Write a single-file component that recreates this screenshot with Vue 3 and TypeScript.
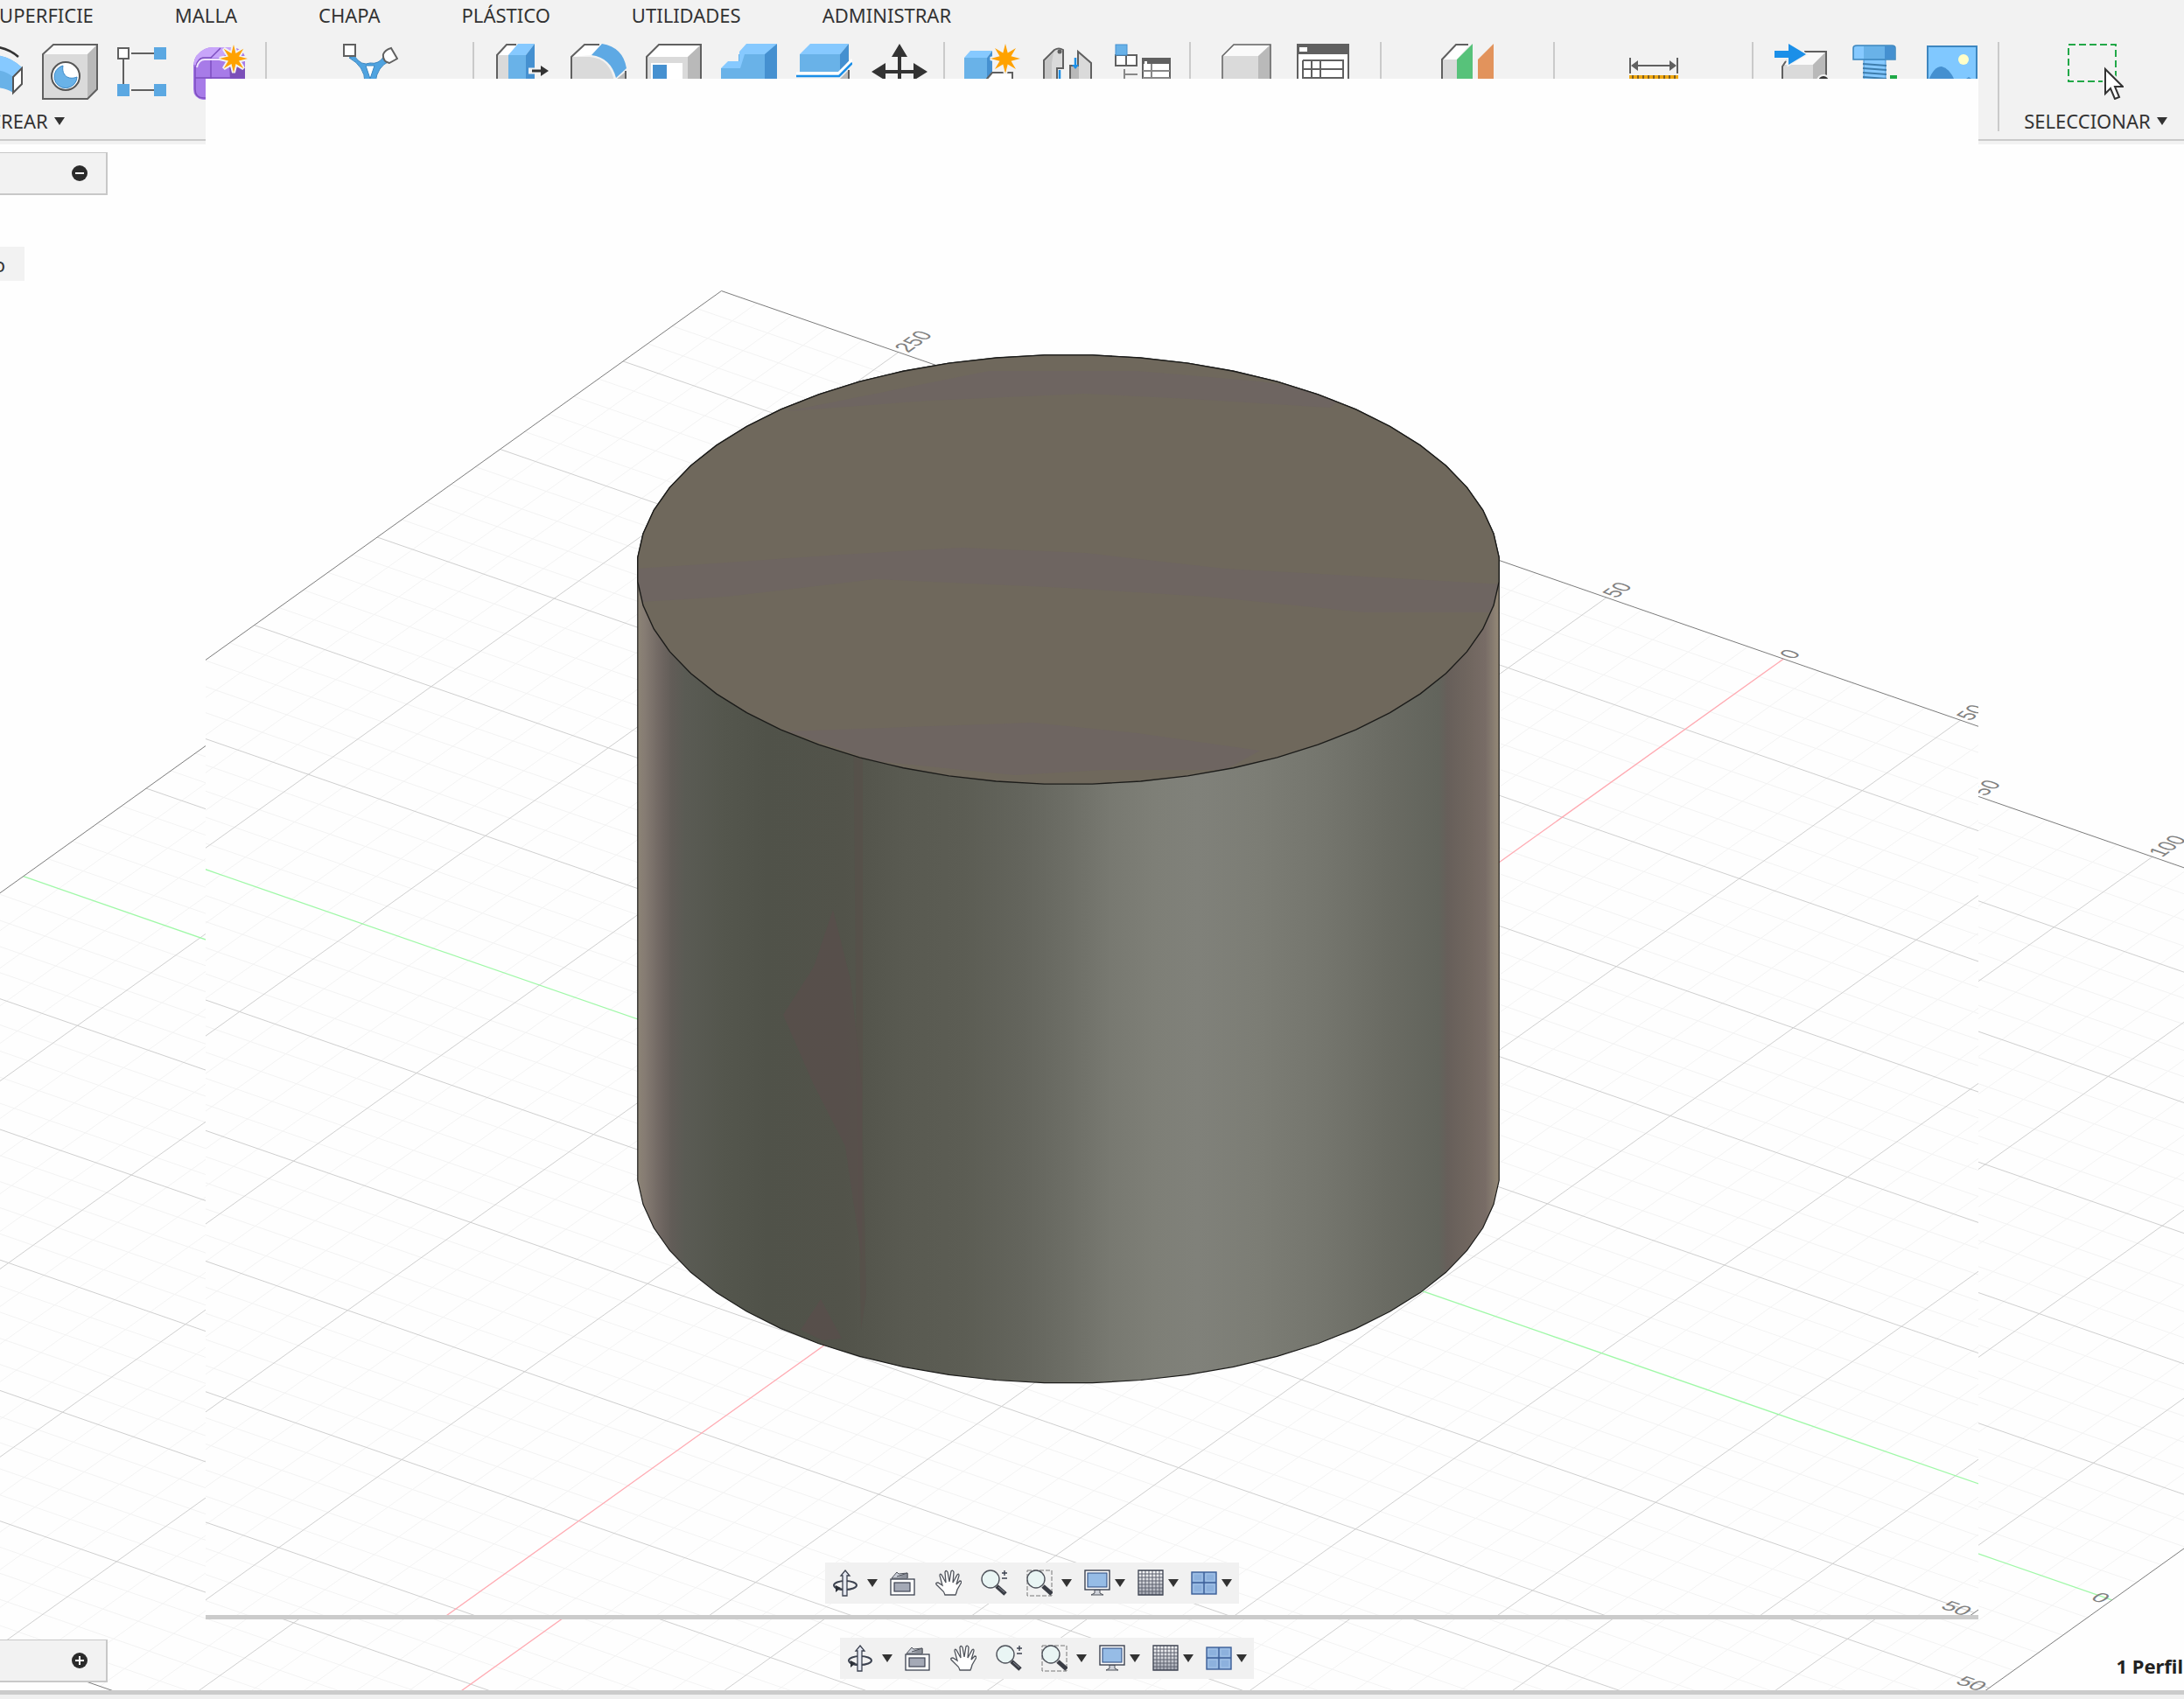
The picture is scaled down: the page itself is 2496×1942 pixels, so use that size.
<script setup lang="ts">
interface Point { x: number; y: number }
interface Segment { x1: number; y1: number; x2: number; y2: number }
interface Tick { text: string; matrix: string; anchor: string }
interface RibbonGroup { id: string; width: number; icons: string[]; label?: string }
interface ViewTool { id: string; name: string; menu: boolean; tight: boolean }

const tabs: string[] = ['SUPERFICIE', 'MALLA', 'CHAPA', 'PLÁSTICO', 'UTILIDADES', 'ADMINISTRAR']

const groups: RibbonGroup[] = [
  { id: 'create', width: 547, icons: ['revolve', 'hole', 'pattern', 'form'], label: 'CREAR' },
  { id: 'auto', width: 237, icons: ['auto'] },
  { id: 'modify', width: 538, icons: ['press', 'fillet', 'shell', 'combine', 'split', 'move'] },
  { id: 'assemble', width: 281, icons: ['component', 'joint', 'bom'] },
  { id: 'configure', width: 218, icons: ['box', 'table'] },
  { id: 'construct', width: 198, icons: ['plane'] },
  { id: 'inspect', width: 227, icons: ['measure'] },
  { id: 'insert', width: 281, icons: ['insert', 'bolt', 'canvas'] },
  { id: 'select', width: 220, icons: ['select'], label: 'SELECCIONAR' },
]

const star = (cx: number, cy: number, outer: number, inner: number): string => {
  const pts: string[] = []
  for (let i = 0; i < 16; i++) {
    const r = i % 2 === 0 ? outer : inner
    const a = (i * Math.PI) / 8 - Math.PI / 2
    pts.push(`${(cx + r * Math.cos(a)).toFixed(1)},${(cy + r * Math.sin(a)).toFixed(1)}`)
  }
  return `<polygon points="${pts.join(' ')}" fill="#ffa200" stroke="#f2f2f2" stroke-width="4" paint-order="stroke"/>`
}

const art: Record<string, string> = {
  revolve: `<path d="M30 3Q48 5 59 15" fill="none" stroke="#333" stroke-width="2.5"/><path d="M30 13Q48 13 63 27L53 38V56Q44 50 30 50Z" fill="#69b2e8"/><path d="M30 13Q48 13 63 27L53 38Q44 30 30 30Z" fill="#86c9ff"/><path d="M53 38L63 28V46L53 56Z" fill="#fff" stroke="#555" stroke-width="2"/>`,
  hole: `<path d="M1 12L13 1H63V52L52 63H1Z" fill="#dadada"/><path d="M1 12L13 1H63L52 12Z" fill="#fafafa"/><path d="M52 12L63 1V52L52 63Z" fill="#b9b9b9"/><path d="M1 12L13 1H63V52L52 63H1Z" fill="none" stroke="#606060" stroke-width="2"/><circle cx="27" cy="37" r="16" fill="#fff" stroke="#555" stroke-width="2"/><path d="M24 25C22 36 30 42 40 38A13 13 0 1 1 24 25Z" fill="#69b2e8" stroke="#3d8ac8"/>`,
  pattern: `<path d="M16 11H42M7 18V46M16 53H42" stroke="#606060" stroke-width="2"/><rect x="1" y="5" width="12" height="12" fill="#fff" stroke="#606060" stroke-width="2"/><path d="M42 4h14v14h-14zM0 46h14v14H0zM42 46h14v14h-14z" fill="#5ba8e2"/>`,
  form: `<path d="M1 24Q2 12 14 6Q18 4 24 4H46Q60 6 60 18V48Q58 58 50 62Q48 64 42 64H12Q1 62 1 52Z" fill="#a77be8"/><path d="M1 24Q2 12 14 6Q18 4 24 4H46L34 16H14Q6 16 4 24Z" fill="#c8a5fa"/><path d="M42 22Q52 20 60 26V48Q56 60 44 63Z" fill="#7b4fb8"/><path d="M3 26V52Q3 62 13 62H42M3 39H60M21 16V62M21 16L32 5M21 16H12Q6 17 4 26" fill="none" stroke="#7e4fc0" stroke-width="1.5"/><path d="M5 27Q7 18 14 18H38" fill="none" stroke="#efe3ff" stroke-width="2"/>${star(47, 17, 16, 6.5)}`,
  auto: `<path d="M14 14Q22 26 32 22Q42 24 48 14L54 20Q40 26 38 44H26Q26 26 8 16Z" fill="#4fa3e0" stroke="#3b86c0"/><path d="M27 25H37L32 40Z" fill="#fff" stroke="#3b86c0"/><rect x="2" y="1" width="13" height="13" fill="#fff" stroke="#606060" stroke-width="2"/><path d="M56 5L63 17L54 22Q46 20 47 12Q49 7 56 5Z" fill="#fff" stroke="#606060" stroke-width="2"/>`,
  press: `<path d="M2 64V13L13 1H26L16 13V64Z" fill="#dadada"/><path d="M2 13L13 1H26L15 13Z" fill="#fff"/><path d="M2 64V13L13 1H24" fill="none" stroke="#606060" stroke-width="2"/><path d="M15 13H35V64H15Z" fill="#69b2e8"/><path d="M15 13L26 0H45L35 13Z" fill="#86c9ff"/><path d="M35 13L45 0V52L35 64Z" fill="#4590d0"/><path d="M38 31H60" stroke="#f2f2f2" stroke-width="7"/><path d="M42 31H54" stroke="#333" stroke-width="3"/><path d="M52 25L61 31L52 37Z" fill="#333"/>`,
  fillet: `<path d="M1 15L16 1H34L24 13Z" fill="#fff"/><path d="M1 64V15H22Q46 17 50 44V64Z" fill="#dadada"/><path d="M1 64V15L16 1H33" fill="none" stroke="#606060" stroke-width="2"/><path d="M36 0Q60 4 64 28L52 39Q46 16 24 13Z" fill="#5ea9e4"/><path d="M52 41L64 31V64H52Z" fill="#b9b9b9"/><path d="M63 31V64" stroke="#606060" stroke-width="2"/>`,
  shell: `<path d="M1 15L15 1H63L48 15Z" fill="#fff"/><path d="M1 15H48V64H1Z" fill="#dadada"/><path d="M48 15L63 1V50L48 64Z" fill="#b9b9b9"/><path d="M6 22H42V60H6Z" fill="#fff"/><path d="M8 24H24V60H8Z" fill="#4590d0"/><path d="M1 64V15L15 1H63V50" fill="none" stroke="#606060" stroke-width="2"/>`,
  combine: `<path d="M0 28H20V12H50V64H0Z" fill="#69b2e8"/><path d="M0 28L8 20H21V9L29 0H64L52 12H27L22 28Z" fill="#86c9ff"/><path d="M50 12L64 0V50L50 64Z" fill="#4590d0"/>`,
  split: `<path d="M4 12H50V32H4Z" fill="#69b2e8"/><path d="M4 12L16 0H60L50 12Z" fill="#86c9ff"/><path d="M50 12L60 0V20L50 32Z" fill="#4590d0"/><path d="M0 34H48L64 18" fill="none" stroke="#fff" stroke-width="3"/><path d="M0 37H49L64 22" fill="none" stroke="#1b8fe8" stroke-width="2.5"/><path d="M60 30V60L50 64V40Z" fill="#b9b9b9"/><path d="M60 30V60" stroke="#606060" stroke-width="2"/>`,
  move: `<path d="M32 10V54M10 32H54" stroke="#333" stroke-width="4"/><path d="M32 0L41 15H23ZM32 64L41 49H23ZM0 32L16 22V42ZM64 32L48 22V42Z" fill="#333"/>`,
  component: `<path d="M0 16H26V50H0Z" fill="#69b2e8"/><path d="M0 16L7 8H32L26 16Z" fill="#86c9ff"/><path d="M26 16L32 8V32L26 40Z" fill="#4590d0"/><path d="M26 40L32 33H55V60H26Z" fill="#fff" stroke="#606060" stroke-width="2"/>${star(47, 17, 17, 7)}`,
  joint: `<path d="M5 60V19L17 7Q22 4 27 7V28H20V60Z" fill="#dadada" stroke="#606060" stroke-width="2"/><path d="M16 10L6 20V60H14V22Z" fill="#c6c6c6"/><circle cx="23" cy="9" r="2.5" fill="#606060"/><path d="M35 60V25H44V9L59 22V60Z" fill="#dadada" stroke="#606060" stroke-width="2"/><path d="M36 26H45V60H36Z" fill="#b9b9b9"/><path d="M23 30V60M41 16V26" stroke="#1b8fe8" stroke-width="2.5"/><path d="M37 24H45L41 29Z" fill="#1b8fe8"/>`,
  bom: `<path d="M1 13H25V25H1ZM13 13V25" fill="#fff" stroke="#606060" stroke-width="2"/><rect x="1" y="1" width="13" height="12" fill="#69b2e8" stroke="#4590d0"/><path d="M11 29V60M11 35H26" stroke="#888" stroke-width="2"/><path d="M32 17H63V60H32Z" fill="#fff" stroke="#606060" stroke-width="2"/><path d="M32 16H64V23H32Z" fill="#606060"/><path d="M32 31H63M32 39H63M42 23V60" stroke="#888" stroke-width="2"/><path d="M34 20h3v3h-3z" fill="#fff"/>`,
  box: `<path d="M3 14H44V64H3Z" fill="#dadada"/><path d="M3 14L16 1H58L44 14Z" fill="#fafafa"/><path d="M44 14L58 1V52L44 64Z" fill="#b9b9b9"/><path d="M3 64V14L16 1H58V52" fill="none" stroke="#606060" stroke-width="1.5"/>`,
  table: `<path d="M3 1H61V63H3Z" fill="#fff" stroke="#606060" stroke-width="2"/><path d="M2 0H62V12H2Z" fill="#606060"/><path d="M5 4h9v5H5z" fill="#fff"/><path d="M9 19H55V60M9 29H55M9 39H55M9 19V60M19 19V40M29 19V40" fill="none" stroke="#606060" stroke-width="2"/>`,
  plane: `<path d="M3 18L19 1H34L20 18V64H3Z" fill="#fff"/><path d="M3 18H20V64H3Z" fill="#dadada"/><path d="M3 64V18L19 1H33" fill="none" stroke="#606060" stroke-width="2"/><path d="M20 64V18L38 0V50Z" fill="#57c27a"/><path d="M44 64V18L62 0V50Z" fill="#e2935c"/>`,
  measure: `<path d="M5 16V34M59 16V34M10 25H54" stroke="#606060" stroke-width="2"/><path d="M6 25L14 19V31ZM58 25L50 19V31Z" fill="#606060"/><path d="M4 36H60V52H4Z" fill="#f0a810"/><path d="M8 36V46M14 36V41M20 36V41M26 36V41M32 36V46M38 36V41M44 36V41M50 36V41M56 36V46" stroke="#806020" stroke-width="2"/>`,
  insert: `<path d="M11 64V24L22 9H61V50L46 64Z" fill="#dadada"/><path d="M14 22L26 9H61L46 24H11Z" fill="#fafafa"/><path d="M46 24L61 9V50L46 64Z" fill="#b9b9b9"/><path d="M11 64V26L15 20M36 9H61V50" fill="none" stroke="#606060" stroke-width="2"/><path d="M2 8H18V0L38 12L18 24V16H2Z" fill="#1b8fe8" stroke="#f2f2f2" stroke-width="3" paint-order="stroke"/><circle cx="58" cy="43" r="7" fill="#333" stroke="#f2f2f2" stroke-width="2"/>`,
  bolt: `<path d="M18 18H43V64H18Z" fill="#86c9ff" stroke="#4590d0"/><path d="M6 5Q6 2 10 2H50Q54 2 54 5V18H6Z" fill="#69b2e8" stroke="#3d86bf" stroke-width="1.5"/><path d="M7 5Q7 3 10 3H18V17H7Z" fill="#86c9ff"/><path d="M42 3H53V17H42Z" fill="#4590d0"/><path d="M17 23L44 25M17 28L44 30M17 33L44 35M17 38L44 40" stroke="#3d7dad" stroke-width="2"/><path d="M48 36h8v8h-8z" fill="#1ea846"/>`,
  canvas: `<path d="M5 3H61V63H5Z" fill="#80c8ff" stroke="#3d86bf" stroke-width="2"/><ellipse cx="46" cy="18" rx="6" ry="6" fill="#ffffc8"/><path d="M6 42Q12 26 21 26Q30 28 36 42V62H6Z" fill="#4590d0"/><path d="M46 42L52 38L58 42Z" fill="#4590d0"/>`,
  select: `<rect x="1" y="1" width="54" height="42" fill="none" stroke="#22a848" stroke-width="2" stroke-dasharray="8 4"/><path d="M43 29V57L49 51L54 63L59 61L54 49H63Z" fill="#fff" stroke="#f2f2f2" stroke-width="6"/><path d="M43 29V57L49 51L54 63L59 61L54 49H63Z" fill="#fff" stroke="#333" stroke-width="2"/>`,
  orbit: `<ellipse cx="15" cy="18" rx="13" ry="5" fill="none" stroke="#3c4250" stroke-width="2"/><path d="M15 1L20 7H17V30H12V7H10Z" fill="#e6e9f2" stroke="#3c4250" stroke-width="1.3"/><path d="M12 23Q5 22 3 20" fill="none" stroke="#3c4250" stroke-width="2"/><path d="M4 18V26L10 21Z" fill="#2c3038"/>`,
  look: `<path d="M2 10L8 3L10 5L20 4V10Z" fill="#c9cdd6" stroke="#50545c"/><path d="M8 8L20 4V10" fill="#8c909a" stroke="#50545c"/><rect x="1" y="11" width="27" height="18" fill="#fff" stroke="#3c4250" stroke-width="1.3"/><rect x="5" y="15" width="18" height="10" fill="#a4a9b6" stroke="#3c4250" stroke-width="1.2"/>`,
  pan: `<path d="M11 29Q10 25 6 22L1 17Q0 15 3 15L8 18L5 7Q5 4 7 6L12 15L11 3Q12 0 14 3L16 14L18 2Q20 0 21 3L20 15L25 6Q27 4 27 7L24 17L28 13Q31 13 29 16L25 23Q24 27 23 29Z" fill="#fff" stroke="#50545c" stroke-width="1.3"/>`,
  zoom: `<path d="M18 19L28 28" stroke="#3a3d45" stroke-width="5"/><path d="M20 20L27 26" stroke="#8b8f99" stroke-width="1"/><circle cx="11" cy="11" r="10" fill="#e9f5f4" stroke="#50545c" stroke-width="1.4"/><path d="M24 4H30M27 1V7M24 10H30" stroke="#3c4250" stroke-width="1.4"/>`,
  fit: `<path d="M1 1H29V30H1Z" fill="none" stroke="#777" stroke-dasharray="5 2"/><path d="M19 19L29 28" stroke="#3a3d45" stroke-width="5"/><circle cx="11" cy="11" r="10" fill="#e9f5f4" stroke="#50545c" stroke-width="1.4"/>`,
  display: `<path d="M12 23H18V27L22 29H8L12 27Z" fill="#d0d3da" stroke="#50545c"/><rect x="1" y="1" width="28" height="22" fill="#fff" stroke="#3c4250" stroke-width="1.4"/><rect x="4" y="4" width="22" height="16" fill="#96bce6" stroke="#3c5a8c" stroke-width="1.2"/>`,
  grid: `<rect x="1" y="1" width="28" height="28" fill="url(#gridFade)"/><path d="M5 1V29M9 1V29M13 1V29M17 1V29M21 1V29M25 1V29M1 5H29M1 9H29M1 13H29M1 17H29M1 21H29M1 25H29" fill="none" stroke="#5c616e"/><path d="M1 1H29V29H1Z" fill="none" stroke="#3c4250" stroke-width="1.3"/>`,
  viewports: `<rect x="1" y="3" width="28" height="25" fill="#8db1dd" stroke="#3c5f98" stroke-width="1.4"/><path d="M15 3V28M1 15H29" stroke="#3c5f98" stroke-width="1.4"/><path d="M3 5H13V13H3ZM17 5H27V13H17ZM3 17H13V26H3ZM17 17H27V26H17Z" fill="none" stroke="#a4c3e8"/>`,
}

const tools: ViewTool[] = [
  { id: 'orbit', name: 'Orbit', menu: true, tight: false },
  { id: 'look', name: 'Look at', menu: false, tight: false },
  { id: 'pan', name: 'Pan', menu: false, tight: false },
  { id: 'zoom', name: 'Zoom', menu: false, tight: false },
  { id: 'fit', name: 'Fit', menu: true, tight: false },
  { id: 'display', name: 'Display settings', menu: true, tight: true },
  { id: 'grid', name: 'Grid and snaps', menu: true, tight: true },
  { id: 'viewports', name: 'Viewports', menu: true, tight: true },
]

/* Ground plane: u and v are the screen vectors of one 10 mm grid cell. */
const corner: Point = { x: 824.5, y: 332.5 }
const u: Point = { x: 40.46, y: 14.02 }
const v: Point = { x: -28.1, y: 20.11 }
const cells = 59

const at = (a: number, b: number): Point => ({
  x: corner.x + a * u.x + b * v.x,
  y: corner.y + a * u.y + b * v.y,
})
const seg = (a1: number, b1: number, a2: number, b2: number): Segment => {
  const p = at(a1, b1)
  const q = at(a2, b2)
  return { x1: p.x, y1: p.y, x2: q.x, y2: q.y }
}
const path = (list: Segment[]): string =>
  list.map((s) => `M${s.x1.toFixed(1)} ${s.y1.toFixed(1)}L${s.x2.toFixed(1)} ${s.y2.toFixed(1)}`).join('')

const minor: Segment[] = []
const major: Segment[] = []
for (let i = 1; i < cells; i++) {
  if (i !== 30) (i % 5 === 0 ? major : minor).push(seg(i, 0, i, cells))
  if (i !== 29) (i % 5 === 4 ? major : minor).push(seg(0, i, cells, i))
}
const minorPath = path(minor)
const majorPath = path(major)
const edgePath = path([seg(0, 0, cells, 0), seg(0, 0, 0, cells), seg(cells, 0, cells, cells), seg(0, cells, cells, cells)])
const redPath = path([seg(30, 0, 30, cells)])
const greenPath = path([seg(0, 29, cells, 29)])

const backTick = (text: string, a: number): Tick => {
  const p = at(a, 0)
  return { text, anchor: 'start', matrix: `matrix(.787 -.562 1.133 .392 ${p.x + 11} ${p.y + 1})` }
}
const sideTick = (text: string, b: number): Tick => {
  const p = at(cells, b)
  return { text, anchor: 'end', matrix: `matrix(1.133 .392 -.787 .562 ${p.x - 12} ${p.y + 4})` }
}
const innerTicks: Tick[] = [backTick('250', 5), backTick('50', 25), backTick('0', 30), backTick('50', 35), sideTick('50', 34)]
const outerTicks: Tick[] = [backTick('50', 35), backTick('100', 40), sideTick('0', 29), sideTick('50', 34)]

/* Faceted cylinder */
const rim = (cy: number, from: number, to: number): string => {
  const out: string[] = []
  for (let i = from; i < to; i++) {
    const t = ((i + 0.5) * 2 * Math.PI) / 56
    out.push(`${(1221 + 493 * Math.cos(t)).toFixed(1)},${(cy + 245.5 * Math.sin(t)).toFixed(1)}`)
  }
  return out.join(' ')
}
const topFace = rim(651, 0, 56)
const sideFace = `${rim(651, 27, 28)} ${rim(651, 28, 56)} ${rim(651, 55, 56)} ${rim(1335.5, 0, 28)}`

const shades: [number, string][] = [
  [0, '#8c8476'], [0.8, '#867c73'], [2.5, '#716863'], [4, '#615c57'], [5.5, '#5a5b54'], [10, '#54564d'], [15, '#505249'],
  [24, '#52534a'], [31, '#595a51'], [38, '#5c5d54'], [45, '#64655d'], [50, '#6d6e66'], [55, '#787971'],
  [60, '#7e7f77'], [65, '#80817a'], [72, '#7c7d75'], [80, '#74756d'], [87, '#6a6b63'], [93, '#62645c'],
  [94, '#675f5a'], [96.5, '#70665f'], [98.4, '#786c66'], [99.2, '#857a6f'], [100, '#968a77'],
]
</script>

<template>
  <div class="app">
    <svg class="defs" width="0" height="0" aria-hidden="true">
      <defs>
        <linearGradient id="gridFade" x1="0" y1="0" x2="0" y2="1">
          <stop offset="0" stop-color="#ffffff" />
          <stop offset="1" stop-color="#a4a8b2" />
        </linearGradient>
        <linearGradient id="sideShade">
          <stop v-for="s in shades" :key="s[0]" :offset="s[0] + '%'" :stop-color="s[1]" />
        </linearGradient>
        <clipPath id="topClip"><polygon :points="topFace" /></clipPath>
        <g id="ground" fill="none" stroke-width="1">
          <path :d="minorPath" stroke="#f3f3f3" />
          <path :d="majorPath" stroke="#cfcfcf" />
          <path :d="redPath" stroke="#ffaab2" stroke-width="1.3" />
          <path :d="greenPath" stroke="#a0f8a8" stroke-width="1.3" />
          <path :d="edgePath" stroke="#7c7c7c" />
        </g>
      </defs>
    </svg>

    <nav class="tabs">
      <a v-for="t in tabs" :key="t" href="#">{{ t }}</a>
    </nav>

    <header class="ribbon">
      <section v-for="g in groups" :key="g.id" class="group" :class="g.id" :style="{ width: g.width + 'px' }">
        <div class="icons">
          <button v-for="i in g.icons" :key="i" type="button" :aria-label="i">
            <svg viewBox="0 0 64 64" width="64" height="64" v-html="art[i]" />
          </button>
        </div>
        <button v-if="g.label" type="button" class="menu">{{ g.label }}<span class="caret" /></button>
      </section>
    </header>

    <main class="stage">
      <svg class="scene" viewBox="0 165 2496 1767" preserveAspectRatio="xMinYMin slice">
        <g transform="translate(17 86)">
          <use href="#ground" />
          <text v-for="(t, n) in outerTicks" :key="n" class="tick" :transform="t.matrix" :text-anchor="t.anchor">{{ t.text }}</text>
        </g>
      </svg>
      <div class="panel browser">
        <button type="button" aria-label="Collapse">
          <svg viewBox="0 0 20 20" width="20" height="20"><circle cx="10" cy="10" r="9" fill="#2b2b2b" /><path d="M5 10H15" stroke="#fff" stroke-width="2" /></svg>
        </button>
      </div>
      <div class="node">o</div>
      <div class="panel comments">
        <button type="button" aria-label="Expand">
          <svg viewBox="0 0 20 20" width="20" height="20"><circle cx="10" cy="10" r="9" fill="#2b2b2b" /><path d="M5 10H15M10 5V15" stroke="#fff" stroke-width="2" /></svg>
        </button>
      </div>
      <div class="viewbar outer">
        <button v-for="t in tools" :key="t.id" type="button" :class="{ tight: t.tight }" :aria-label="t.name">
          <svg viewBox="0 0 30 31" width="30" height="31" v-html="art[t.id]" /><span v-if="t.menu" class="caret" />
        </button>
      </div>
      <p class="status">1 Perfil</p>
    </main>
    <footer class="foot" />

    <section class="window">
      <svg class="scene" viewBox="235 90 2026 1756" preserveAspectRatio="xMinYMin slice">
        <use href="#ground" />
        <text v-for="(t, n) in innerTicks" :key="n" class="tick" :transform="t.matrix" :text-anchor="t.anchor">{{ t.text }}</text>
        <polygon :points="sideFace" fill="url(#sideShade)" stroke="#1c1c1a" stroke-width="1.2" />
        <path d="M975 790L986 794V1300L990 1480L984 1520L979 1250Z" fill="#57504a" opacity=".7" />
        <path d="M952 1040L972 1120L985 1240V1440L966 1310L930 1240L895 1160L930 1105Z" fill="#594f4b" opacity=".8" />
        <path d="M938 1485L962 1530L940 1532L915 1520Z" fill="#594f4b" opacity=".8" />
        <polygon :points="topFace" fill="#6f685c" />
        <g clip-path="url(#topClip)" fill="#6e6561">
          <path d="M1050 440L1130 424L1300 424L1440 436L1540 450L1520 466L1360 456L1240 450L1060 458L900 470Z" />
          <path d="M700 652L960 634L1100 626L1240 632L1400 650L1720 668V700L1560 700L1380 682L1220 672L1000 662L830 682L700 690Z" />
          <path d="M900 836L1180 826L1300 838L1440 858L1400 880L1260 880L1160 886L1000 870Z" />
        </g>
        <polygon :points="topFace" fill="none" stroke="#1c1c1a" stroke-width="1.4" />
      </svg>
      <div class="viewbar inner">
        <button v-for="t in tools" :key="t.id" type="button" :class="{ tight: t.tight }" :aria-label="t.name">
          <svg viewBox="0 0 30 31" width="30" height="31" v-html="art[t.id]" /><span v-if="t.menu" class="caret" />
        </button>
      </div>
    </section>
  </div>
</template>

<style>
body {
  margin: 0;
  background: #fefefe;
}
</style>

<style scoped>
.app {
  position: relative;
  display: flex;
  flex-direction: column;
  min-height: 100vh;
  overflow: hidden;
  background: #fefefe;
  color: #333;
  font: 22px/24px "Noto Sans", "Open Sans", sans-serif;
}
.defs {
  position: absolute;
}
button {
  display: flex;
  align-items: center;
  margin: 0;
  padding: 0;
  border: 0;
  background: none;
  color: inherit;
  font: inherit;
}
svg {
  display: block;
}
.caret {
  width: 0;
  height: 0;
  border: 6px solid transparent;
  border-top: 9px solid #333;
  border-bottom: 0;
}
.tabs {
  display: flex;
  flex: none;
  gap: 93px;
  box-sizing: border-box;
  height: 36px;
  padding-bottom: 2px;
  margin-left: -13px;
  align-items: center;
  background: #f2f2f2;
}
.tabs a {
  color: inherit;
  text-decoration: none;
}
.ribbon {
  display: flex;
  flex: none;
  height: 102px;
  padding: 12px 0 9px;
  overflow: hidden;
  background: #f2f2f2;
  border-bottom: 2px solid #cacaca;
  box-shadow: 0 4px #f2f2f2;
}
.group {
  display: flex;
  flex: none;
  flex-direction: column;
  align-items: center;
  box-sizing: border-box;
  padding-top: 2px;
  border-right: 2px solid #cacaca;
}
.group.create {
  margin-left: -242px;
}
.group.create .icons {
  align-self: flex-end;
  margin-right: 19px;
}
.group.modify {
  padding-left: 6px;
}
.group.select {
  border-right: 0;
}
.icons {
  display: flex;
  gap: 22px;
}
.menu {
  gap: 7px;
  height: 24px;
  margin-top: 12px;
}
.stage {
  position: relative;
  flex: 1;
  min-height: 1771px;
}
.scene {
  position: absolute;
  inset: 0;
  width: 100%;
  height: 100%;
}
.stage > .scene {
  top: 4px;
  height: calc(100% - 4px);
}
.tick {
  fill: #808080;
  font: 22px "Liberation Sans", sans-serif;
}
.panel {
  position: absolute;
  left: 0;
  display: flex;
  align-items: center;
  justify-content: flex-end;
  box-sizing: border-box;
  width: 123px;
  height: 49px;
  padding-right: 20px;
  background: #f2f2f2;
  border: 2px solid #c8c8c8;
  border-left: 0;
  border-top-width: 1px;
}
.browser {
  top: 13px;
}
.comments {
  bottom: 9px;
}
.node {
  position: absolute;
  top: 121px;
  left: 0;
  display: flex;
  align-items: center;
  justify-content: flex-end;
  box-sizing: border-box;
  width: 28px;
  height: 39px;
  padding-right: 22px;
  overflow: hidden;
  background: #f2f2f2;
}
.status {
  position: absolute;
  right: 1px;
  bottom: 16px;
  margin: 0;
  color: #222;
  font-weight: 700;
}
.foot {
  flex: none;
  height: 5px;
  background: #f0f0f0;
  border-top: 5px solid #cbcbcb;
}
.window {
  position: absolute;
  top: 90px;
  right: 235px;
  bottom: 91px;
  left: 235px;
  overflow: hidden;
  background: #fefefe;
  border-bottom: 5px solid #cbcbcb;
}
.viewbar {
  position: absolute;
  bottom: 13px;
  display: flex;
  box-sizing: border-box;
  height: 47px;
  padding: 0 8px;
  background: #f1f1f1;
}
.viewbar.outer {
  left: calc(50% - 288px);
}
.viewbar.inner {
  left: calc(50% - 305px);
}
.viewbar button {
  gap: 10px;
}
.viewbar button + button {
  margin-left: 22px;
}
.viewbar button:has(.caret) + button {
  margin-left: 14px;
}
.viewbar .tight {
  gap: 5px;
}
</style>
